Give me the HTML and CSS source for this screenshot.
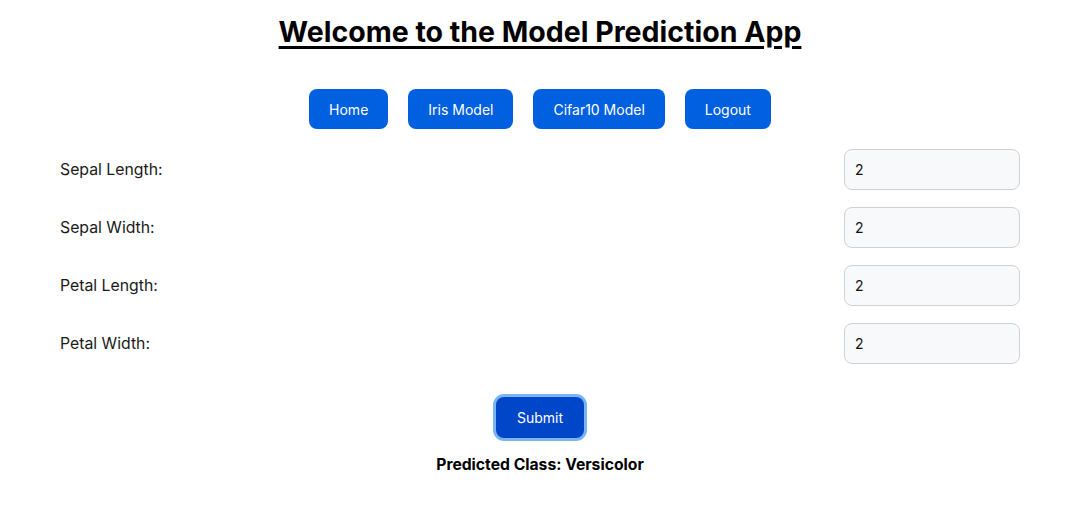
FILE: index.html
```html
<!DOCTYPE html>
<html>
<head>
<meta charset="utf-8">
<link rel="stylesheet" href="styles.css">
</head>
<body>
<div class="app">
  <h1 class="title">Welcome to the Model Prediction App</h1>
  <nav class="nav">
    <button class="btn">Home</button>
    <button class="btn">Iris Model</button>
    <button class="btn">Cifar10 Model</button>
    <button class="btn">Logout</button>
  </nav>
  <form class="form">
    <div class="row"><label class="label">Sepal Length:</label><input class="input" value="2"></div>
    <div class="row"><label class="label">Sepal Width:</label><input class="input" value="2"></div>
    <div class="row"><label class="label">Petal Length:</label><input class="input" value="2"></div>
    <div class="row"><label class="label">Petal Width:</label><input class="input" value="2"></div>
    <div class="submit-wrap"><button type="button" class="submit">Submit</button></div>
  </form>
  <p class="result">Predicted Class: Versicolor</p>
</div>
</body>
</html>
```
FILE: styles.css
```css
* { box-sizing: border-box; }
body {
  margin: 0;
  background: #fff;
  font-family: Inter, "Noto Sans", sans-serif;
  color: #111;
}
.app {
  padding: 0 63px 0 60px;
}
.title {
  margin: 0;
  padding-top: 14px;
  text-align: center;
  font-size: 28.5px;
  line-height: 36px;
  font-weight: 700;
  text-decoration: underline;
  text-underline-offset: 4px;
  text-decoration-thickness: 3px;
  color: #000;
}
.nav {
  display: flex;
  justify-content: center;
  gap: 20px;
  margin-top: 39px;
}
.btn {
  height: 40px;
  padding: 0 20px;
  border: none;
  border-radius: 8px;
  background: #0060df;
  color: #fff;
  font-family: inherit;
  font-size: 14px;
}
.form {
  margin-top: 20px;
  display: flex;
  flex-direction: column;
  gap: 17px;
}
.row {
  display: flex;
  justify-content: space-between;
  align-items: center;
}
.label {
  font-size: 15.8px;
  color: #1a1a1a;
}
.input {
  width: 176px;
  height: 41px;
  padding: 0 10px;
  border: 1px solid #cfd1d4;
  border-radius: 8px;
  background: #f8f9fa;
  font-family: inherit;
  font-size: 14px;
  color: #111;
}
.submit-wrap {
  display: flex;
  justify-content: center;
  margin-top: 16px;
}
.submit {
  height: 41px;
  padding: 0 21px;
  border: none;
  border-radius: 8px;
  background: #0046c9;
  color: #fff;
  font-family: inherit;
  font-size: 14px;
  box-shadow: 0 0 0 3px #79b5f3;
}
.result {
  margin: 17px 0 0;
  text-align: center;
  font-size: 15.7px;
  font-weight: 700;
  color: #000;
}
```
